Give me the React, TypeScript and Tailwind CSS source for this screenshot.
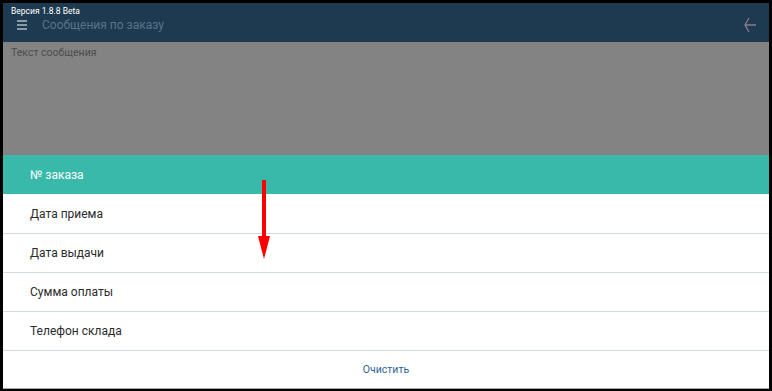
const rows = ["Дата приема", "Дата выдачи", "Сумма оплаты", "Телефон склада"];

export default function App() {
  return (
    <div
      className="relative h-[391px] w-[772px] overflow-hidden bg-black pt-[3px] pl-[3px] pr-[3px] pb-[2px]"
      style={{ fontFamily: "Roboto, 'Liberation Sans', sans-serif" }}
    >
      <div className="flex h-full flex-col bg-white">
        {/* top bar */}
        <div className="relative h-[39px] shrink-0 bg-[#1e3a51]">
          <div className="absolute left-[8px] top-[3px] text-[8.5px] leading-[11px] text-white">
            Версия 1.8.8 Beta
          </div>
          <div className="flex h-full items-center pt-[5px]">
            <div className="ml-[14px] flex w-[10px] flex-col gap-[2px]">
              <span className="h-[2px] bg-[#8a9aa8]" />
              <span className="h-[2px] bg-[#8a9aa8]" />
              <span className="h-[2px] bg-[#8a9aa8]" />
            </div>
            <span className="ml-[15px] text-[12px] text-[#587388]">Сообщения по заказу</span>
            <svg className="ml-auto mr-[12px]" width="14" height="18" viewBox="0 0 14 18">
              <path d="M6 2 L2 9 L6 16 M2 9 L13 9" stroke="#8b7b8b" strokeWidth="1.3" fill="none" />
            </svg>
          </div>
        </div>
        {/* message area */}
        <div className="h-[113px] shrink-0 bg-[#838383] px-[8px] pt-[3px] text-[10.5px] text-[#4d4d4d]">
          Текст сообщения
        </div>
        {/* list */}
        <div className="flex h-[39px] shrink-0 items-center bg-[#39b9aa] pl-[27px] text-[12px] text-white">
          № заказа
        </div>
        {rows.map((r, i) => (
          <div
            key={r}
            className={`flex shrink-0 items-center pl-[27px] text-[12px] text-[#2b2b2b] border-b border-[#d3dce3] ${
              i === 0 ? "h-[40px]" : "h-[39px]"
            }`}
          >
            {r}
          </div>
        ))}
        <div className="flex flex-1 items-center justify-center border-b border-[#a8a8a8] text-[10.5px] text-[#2f6496]">
          Очистить
        </div>
      </div>
      {/* red arrow overlay */}
      <svg className="absolute left-[256px] top-[180px]" width="16" height="80" viewBox="0 0 16 80">
        <rect x="6" y="0" width="4" height="60" fill="#ff0000" />
        <path d="M2 56 L14 56 L8 79 Z" fill="#ff0000" />
      </svg>
    </div>
  );
}
